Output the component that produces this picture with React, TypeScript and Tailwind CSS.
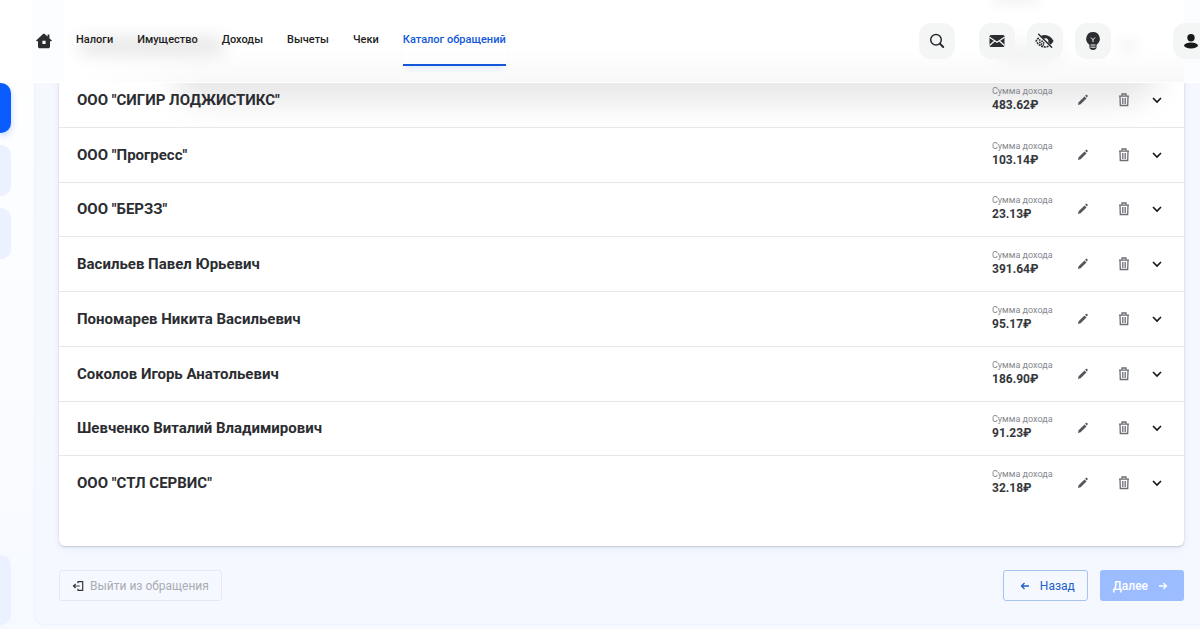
import React from "react";

type Income = { name: string; amount: string };

const incomes: Income[] = [
  { name: 'ООО "СИГИР ЛОДЖИСТИКС"', amount: "483.62" },
  { name: 'ООО "Прогресс"', amount: "103.14" },
  { name: 'ООО "БЕРЗЗ"', amount: "23.13" },
  { name: "Васильев Павел Юрьевич", amount: "391.64" },
  { name: "Пономарев Никита Васильевич", amount: "95.17" },
  { name: "Соколов Игорь Анатольевич", amount: "186.90" },
  { name: "Шевченко Виталий Владимирович", amount: "91.23" },
  { name: 'ООО "СТЛ СЕРВИС"', amount: "32.18" },
];

const links = ["Налоги", "Имущество", "Доходы", "Вычеты", "Чеки"];

function HomeIcon() {
  return (
    <svg width="16" height="16" viewBox="0 0 16 16" fill="#2b2d31" aria-hidden="true">
      <path
        fillRule="evenodd"
        d="M8 .5 11.6 3.6V1.6h1.800v3.600l2.200 2c.5.500.2 1-.4 1H14v5.300c0 1.100-.7 1.800-1.800 1.800H3.800c-1.100 0-1.800-.7-1.800-1.800V8.200H.8c-.6 0-.9-.5-.4-1L7 1.100ZM6.400 7.700v3.200h3.200V7.700Z"
      />
    </svg>
  );
}

function SearchIcon() {
  return (
    <svg width="16" height="16" viewBox="0 0 16 16" fill="none" stroke="#2b2d31" aria-hidden="true">
      <circle cx="7" cy="6.800" r="5.300" strokeWidth="1.500" />
      <path d="m11 10.800 3.200 3.200" strokeWidth="2" strokeLinecap="round" />
    </svg>
  );
}

function MailIcon() {
  return (
    <svg width="16" height="16" viewBox="0 0 16 16" aria-hidden="true">
      <rect x=".5" y="2" width="15" height="12" rx="1.500" fill="#2b2d31" />
      <path d="M.5 4.200 8 9.200l7.500-5M.5 12.500l5-4.600M15.500 12.500l-5-4.600" fill="none" stroke="#f4f6f6" strokeWidth="1.300" />
    </svg>
  );
}

function HiddenIcon() {
  return (
    <svg width="20" height="16" viewBox="0 0 20 16" aria-hidden="true">
      <path d="M5.500 3.300C10 .6 15.500 2.400 18.600 8c-.8 1.600-1.800 2.800-3 3.700l-2.300-2.300c.8-2.700-1.500-5-4.200-3.700Z" fill="#2b2d31" />
      <path d="M3.700 4.800C2.600 5.700 1.700 6.800 1.200 8c2.500 5.200 8 7.200 12.500 5.200" fill="none" stroke="#2b2d31" strokeWidth="1.600" strokeDasharray="2 .8" />
      <path d="M5 6.300c-1.300 3 1 6 5 5.700M7 7.500c0 1.500 1 2.500 2.600 2.500" fill="none" stroke="#2b2d31" strokeWidth="1.700" strokeDasharray="1.500 .8" />
      <path d="m3.600 1.300 13 13" stroke="#2b2d31" strokeWidth="1.500" strokeLinecap="round" />
    </svg>
  );
}

function BulbIcon() {
  return (
    <svg width="16" height="20" viewBox="0 0 16 20" aria-hidden="true">
      <path d="M8 1a6.700 6.700 0 0 1 4.300 11.900c-.5.400-.8.900-.8 1.500v2.200C11.500 18.200 10 19 8 19s-3.500-.8-3.500-2.400v-2.200c0-.6-.3-1.100-.8-1.500A6.700 6.700 0 0 1 8 1Z" fill="#2b2d31" />
      <path d="M6 6.500 8 8.800l2-2.300M8 8.800v2.400M5.500 14h5M5.500 16.200h5" fill="none" stroke="#f4f6f6" strokeWidth="1" />
    </svg>
  );
}

function PersonIcon() {
  return (
    <svg width="16" height="16" viewBox="0 0 16 16" fill="#17181a" aria-hidden="true">
      <circle cx="8" cy="4.700" r="3.700" />
      <ellipse cx="8" cy="12.500" rx="7" ry="2.900" />
    </svg>
  );
}

function PencilIcon() {
  return (
    <svg width="12" height="12" viewBox="0 0 12 12" fill="#53565b" aria-hidden="true">
      <path d="m1 11 .6-2.700 5.900-5.900 2 2-5.900 5.900ZM8.100 1.800l.8-.7c.5-.4 1-.3 1.500.1.400.5.500 1 .1 1.500l-.7.800Z" />
    </svg>
  );
}

function TrashIcon() {
  return (
    <svg width="14" height="14" viewBox="0 0 14 14" fill="none" stroke="#6b6e73" aria-hidden="true">
      <path d="M2 3.100h10M5 2.900V1h4v1.900M3 3.500l.3 9h7.400l.3-9M5.800 5v6M8.200 5v6" strokeWidth="1.300" />
    </svg>
  );
}

function ChevronIcon() {
  return (
    <svg width="12" height="12" viewBox="0 0 12 12" fill="none" stroke="#141517" aria-hidden="true">
      <path d="m2 4 4 4 4-4" strokeWidth="1.600" />
    </svg>
  );
}

function ExitIcon() {
  return (
    <svg width="12" height="12" viewBox="0 0 12 12" fill="none" stroke="#34363a" aria-hidden="true">
      <path d="M6 3.300V1.700h4.700v8.600H6V8.700M7.700 6H1.500M3.600 4 1.500 6l2.100 2" strokeWidth="1.200" />
    </svg>
  );
}

function ArrowIcon({ back = false }: { back?: boolean }) {
  return (
    <svg width="10" height="10" viewBox="0 0 10 10" fill="none" stroke="currentColor" aria-hidden="true">
      <path d={back ? "M9 5H1.500M4.500 2l-3 3 3 3" : "M1 5h7.500M5.500 2l3 3-3 3"} strokeWidth="1.300" />
    </svg>
  );
}

function IconButton({ label, children }: { label: string; children: React.ReactNode }) {
  return (
    <button type="button" aria-label={label} className="flex size-9 shrink-0 items-center justify-center rounded-xl bg-[#f4f6f6]">
      {children}
    </button>
  );
}

function Header() {
  return (
    <header className="sticky top-0 z-10 bg-linear-to-b from-white from-60% to-[#f8f8f8]">
      <div aria-hidden="true" className="absolute inset-0 overflow-hidden">
        <div className="absolute bottom-0 left-0 h-8 w-52 bg-linear-to-r from-white from-40% to-transparent" />
        <div className="absolute inset-y-0 left-8 w-8 bg-[#fcfdff]" />
        <div className="absolute inset-y-0 right-0 w-4 bg-[#fcfdff]" />
        <div className="absolute top-10 left-20 h-3 w-36 rounded-full bg-black/14 blur-[9px]" />
        <div className="absolute top-11 right-[140px] h-4 w-16 rounded-full bg-black/6 blur-[9px]" />
        <div className="absolute top-10 right-16 h-3 w-4 rounded-full bg-black/6 blur-[7px]" />
        <div className="absolute -top-1 right-40 h-2 w-12 rounded-full bg-black/6 blur-[6px]" />
        <div className="absolute inset-x-0 bottom-0 h-px bg-white" />
      </div>
      <div className="relative flex items-start overflow-hidden pt-[23px] pl-9">
        <a href="#home" aria-label="Главная" className="flex h-9 items-center">
          <HomeIcon />
        </a>
        <nav className="ml-6 flex gap-6 text-[11px] leading-[34px] font-medium text-[#1d1f22]">
          {links.map((link) => (
            <a key={link} href="#section" className="h-[43px]">
              {link}
            </a>
          ))}
          <a
            href="#catalog"
            aria-current="page"
            className="h-[43px] border-b-2 border-[#1258d8] text-[#1258d8] shadow-[0_6px_6px_-3px_rgba(18,88,216,0.1)]"
          >
            Каталог обращений
          </a>
        </nav>
        <div className="-mr-[9px] ml-auto flex h-[60px] items-start">
          <IconButton label="Поиск"><SearchIcon /></IconButton>
          <div className="ml-6 flex gap-3">
            <IconButton label="Сообщения"><MailIcon /></IconButton>
            <IconButton label="Версия для слабовидящих"><HiddenIcon /></IconButton>
            <IconButton label="Подсказки"><BulbIcon /></IconButton>
          </div>
          <div className="ml-[62px]">
            <IconButton label="Профиль"><PersonIcon /></IconButton>
          </div>
        </div>
      </div>
    </header>
  );
}

function IncomeRow({ name, amount }: Income) {
  return (
    <li className="flex items-center border-b border-[#e6e7e9] pr-[21px] pl-[18px] last:border-transparent">
      <h2 className="flex-1 text-[15px] leading-5 font-bold text-[#2b2d31]">{name}</h2>
      <div className="w-[85px] pb-1">
        <p className="text-[9px] leading-[14px] text-[#85888e]">Сумма дохода</p>
        <p className="text-xs leading-[14px] font-bold text-[#35373b]">{amount}₽</p>
      </div>
      <button type="button" aria-label="Изменить" className="mr-7"><PencilIcon /></button>
      <button type="button" aria-label="Удалить" className="mr-5"><TrashIcon /></button>
      <button type="button" aria-label="Развернуть"><ChevronIcon /></button>
    </li>
  );
}

export default function App() {
  return (
    <div className="flex min-h-screen flex-col overflow-x-clip bg-linear-to-b from-white to-[#f6f9ff] font-['Roboto','Liberation_Sans',sans-serif]">
      <Header />
      <div className="-mt-[10px] flex flex-1 pb-1">
        <aside aria-hidden="true" className="flex w-[34px] shrink-0 flex-col gap-3">
          <div className="relative z-20 mt-[10px] h-[50px] w-[11px] rounded-r-[10px] bg-[#0a5cff] shadow-[0_3px_6px_rgba(10,92,255,0.25)]" />
          <div className="h-[51px] w-[11px] rounded-r-[10px] bg-[#ebf1ff]" />
          <div className="h-[51px] w-[11px] rounded-r-[10px] bg-[#ebf1ff]" />
          <div className="mt-auto h-[70px] w-[11px] rounded-r-[10px] bg-[#ebf1ff]" />
        </aside>
        <main className="relative min-w-0 flex-1 rounded-bl-[10px] border-b border-l border-[#edf2fd] bg-[#f5f8ff] pr-4 pb-[23px] pl-6">
          <section className="relative rounded-b-md bg-white pb-[35px] shadow-[0_1px_2px_rgba(30,40,70,0.2),0_2px_8px_rgba(30,60,130,0.07)]">
            <div aria-hidden="true" className="pointer-events-none absolute inset-x-0 top-0 h-20 overflow-hidden">
              <div className="absolute -top-10 right-6 left-28 h-[70px] rounded-full bg-black/9 blur-[14px]" />
            </div>
            <ul className="relative grid min-h-[438px] auto-rows-fr">
              {incomes.map((income) => (
                <IncomeRow key={income.name} {...income} />
              ))}
            </ul>
          </section>
          <footer className="mt-6 flex items-center text-xs">
            <button type="button" className="flex h-[31px] items-center gap-1.5 rounded-[3px] border border-[#e5e8ef] px-3 text-[#a9acb3]">
              <ExitIcon />
              Выйти из обращения
            </button>
            <button type="button" className="ml-auto flex h-[31px] items-center gap-2.5 rounded-[3px] border border-[#a5c3ee] pr-3 pl-4 text-[#1f5fc8]">
              <ArrowIcon back />
              Назад
            </button>
            <button type="button" className="ml-3 flex h-[31px] items-center gap-2.5 rounded-[3px] bg-[#9bbcff] pr-4 pl-[13px] font-medium text-white">
              Далее
              <ArrowIcon />
            </button>
          </footer>
        </main>
      </div>
    </div>
  );
}
